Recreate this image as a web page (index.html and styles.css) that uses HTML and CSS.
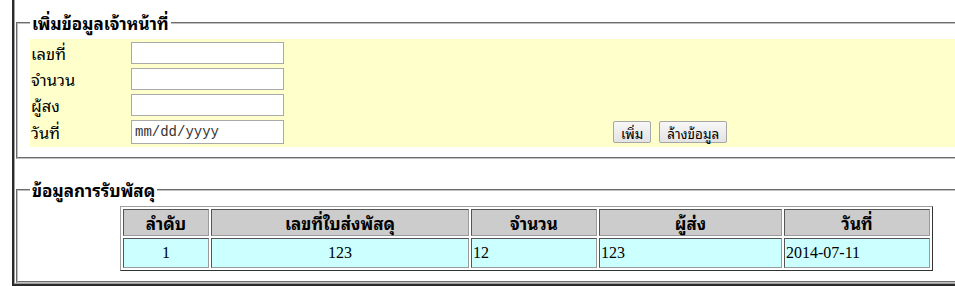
FILE: index.html
```html
<!DOCTYPE html>
<html lang="th">
<head>
    <meta charset="UTF-8">
    <title>ข้อมูลการรับพัสดุ</title>
    <link rel="stylesheet" href="styles.css">
</head>
<body>

    <div class="page">
        <fieldset class="box">
            <legend>เพิ่มข้อมูลเจ้าหน้าที่</legend>
            <form class="form-area">
                <label for="docNo">เลขที่</label>
                <input type="text" id="docNo">
                <span></span>

                <label for="amount">จำนวน</label>
                <input type="text" id="amount">
                <span></span>

                <label for="sender">ผู้สง</label>
                <input type="text" id="sender">
                <span></span>

                <label for="date">วันที่</label>
                <input type="text" id="date" class="date" placeholder="mm/dd/yyyy">
                <div class="actions">
                    <button type="button">เพิ่ม</button>
                    <button type="reset">ล้างข้อมูล</button>
                </div>
            </form>
        </fieldset>

        <fieldset class="box box-list">
            <legend>ข้อมูลการรับพัสดุ</legend>
            <table class="list">
                <tr>
                    <th class="c-no">ลำดับ</th>
                    <th class="c-doc">เลขที่ใบส่งพัสดุ</th>
                    <th class="c-amount">จำนวน</th>
                    <th class="c-sender">ผู้ส่ง</th>
                    <th class="c-date">วันที่</th>
                </tr>
                <tr>
                    <td class="center">1</td>
                    <td class="center">123</td>
                    <td>12</td>
                    <td>123</td>
                    <td>2014-07-11</td>
                </tr>
            </table>
        </fieldset>
    </div>

</body>
</html>
```

FILE: styles.css
```css
html, body {
    overflow: hidden;
}
body {
    margin: 0;
    font-family: "Tahoma", "Noto Sans Thai Looped", "Loma", "Garuda", "Norasi", "Noto Sans Thai", "DejaVu Sans", sans-serif;
    font-size: 16px;
    color: #000;
    background: #fff;
}
.page {
    width: 1025px;
    margin-left: 12px;
    padding-top: 12px;
    border-left: 2px solid #2b2b2b;
    border-bottom: 2px solid #2b2b2b;
    box-shadow: inset 1px -1px 0 #a0a0a0;
}
.box {
    margin: 0 2px;
    padding: 5px 12px 10px;
    border: 2px groove #c0c0c0;
}
.box legend {
    padding: 0 2px;
    font-weight: bold;
    font-size: 17px;
    line-height: 22px;
}
.box-list {
    margin-top: 20px;
    margin-bottom: 1px;
}
.form-area {
    display: grid;
    grid-template-columns: 101px 153px 1fr;
    grid-template-rows: 26px 26px 26px 28px;
    align-items: center;
    padding: 1px 0;
    background-color: #FFFFCC;
}
.form-area label {
    padding-left: 1px;
    font-size: 16.5px;
    line-height: 20px;
}
.form-area input {
    box-sizing: border-box;
    width: 153px;
    height: 22px;
    margin: 0;
    padding: 1px 4px;
    border: 1px solid #a9a9a9;
    background: #fff;
    font-size: 13px;
}
.form-area input.date {
    height: 24px;
    padding-left: 3px;
    font-family: "Liberation Mono", "Courier New", monospace;
    font-size: 14px;
}
.form-area input.date::placeholder {
    color: #333;
}
.actions {
    display: flex;
    gap: 8px;
    padding-left: 329px;
}
.actions button {
    height: 22px;
    padding: 0 7px;
    border: 1px solid #a6a6a6;
    border-radius: 2px;
    background: linear-gradient(#f7f7f7, #e3e3e3);
    font-family: inherit;
    font-size: 13.5px;
    color: #000;
}
.list {
    table-layout: fixed;
    width: 811px;
    margin: 0 auto;
    border: 1px solid;
    border-color: #a0a0a0 #333 #333 #a0a0a0;
    border-spacing: 2px;
}
.list th, .list td {
    box-sizing: border-box;
    padding: 0 1px;
    border: 1px solid;
    border-color: #555 #9a9a9a #9a9a9a #555;
    line-height: 20px;
}
.list th {
    height: 27px;
    background-color: #CCCCCC;
    font-weight: bold;
    font-size: 17px;
}
.list td {
    height: 30px;
    background-color: #CCFFFF;
    font-family: "Liberation Serif", "Times New Roman", serif;
    font-size: 16px;
}
.list td.center {
    text-align: center;
}
.c-no { width: 86px; }
.c-doc { width: 258px; }
.c-amount { width: 126px; }
.c-sender { width: 183px; }
.c-date { width: 146px; }
```
